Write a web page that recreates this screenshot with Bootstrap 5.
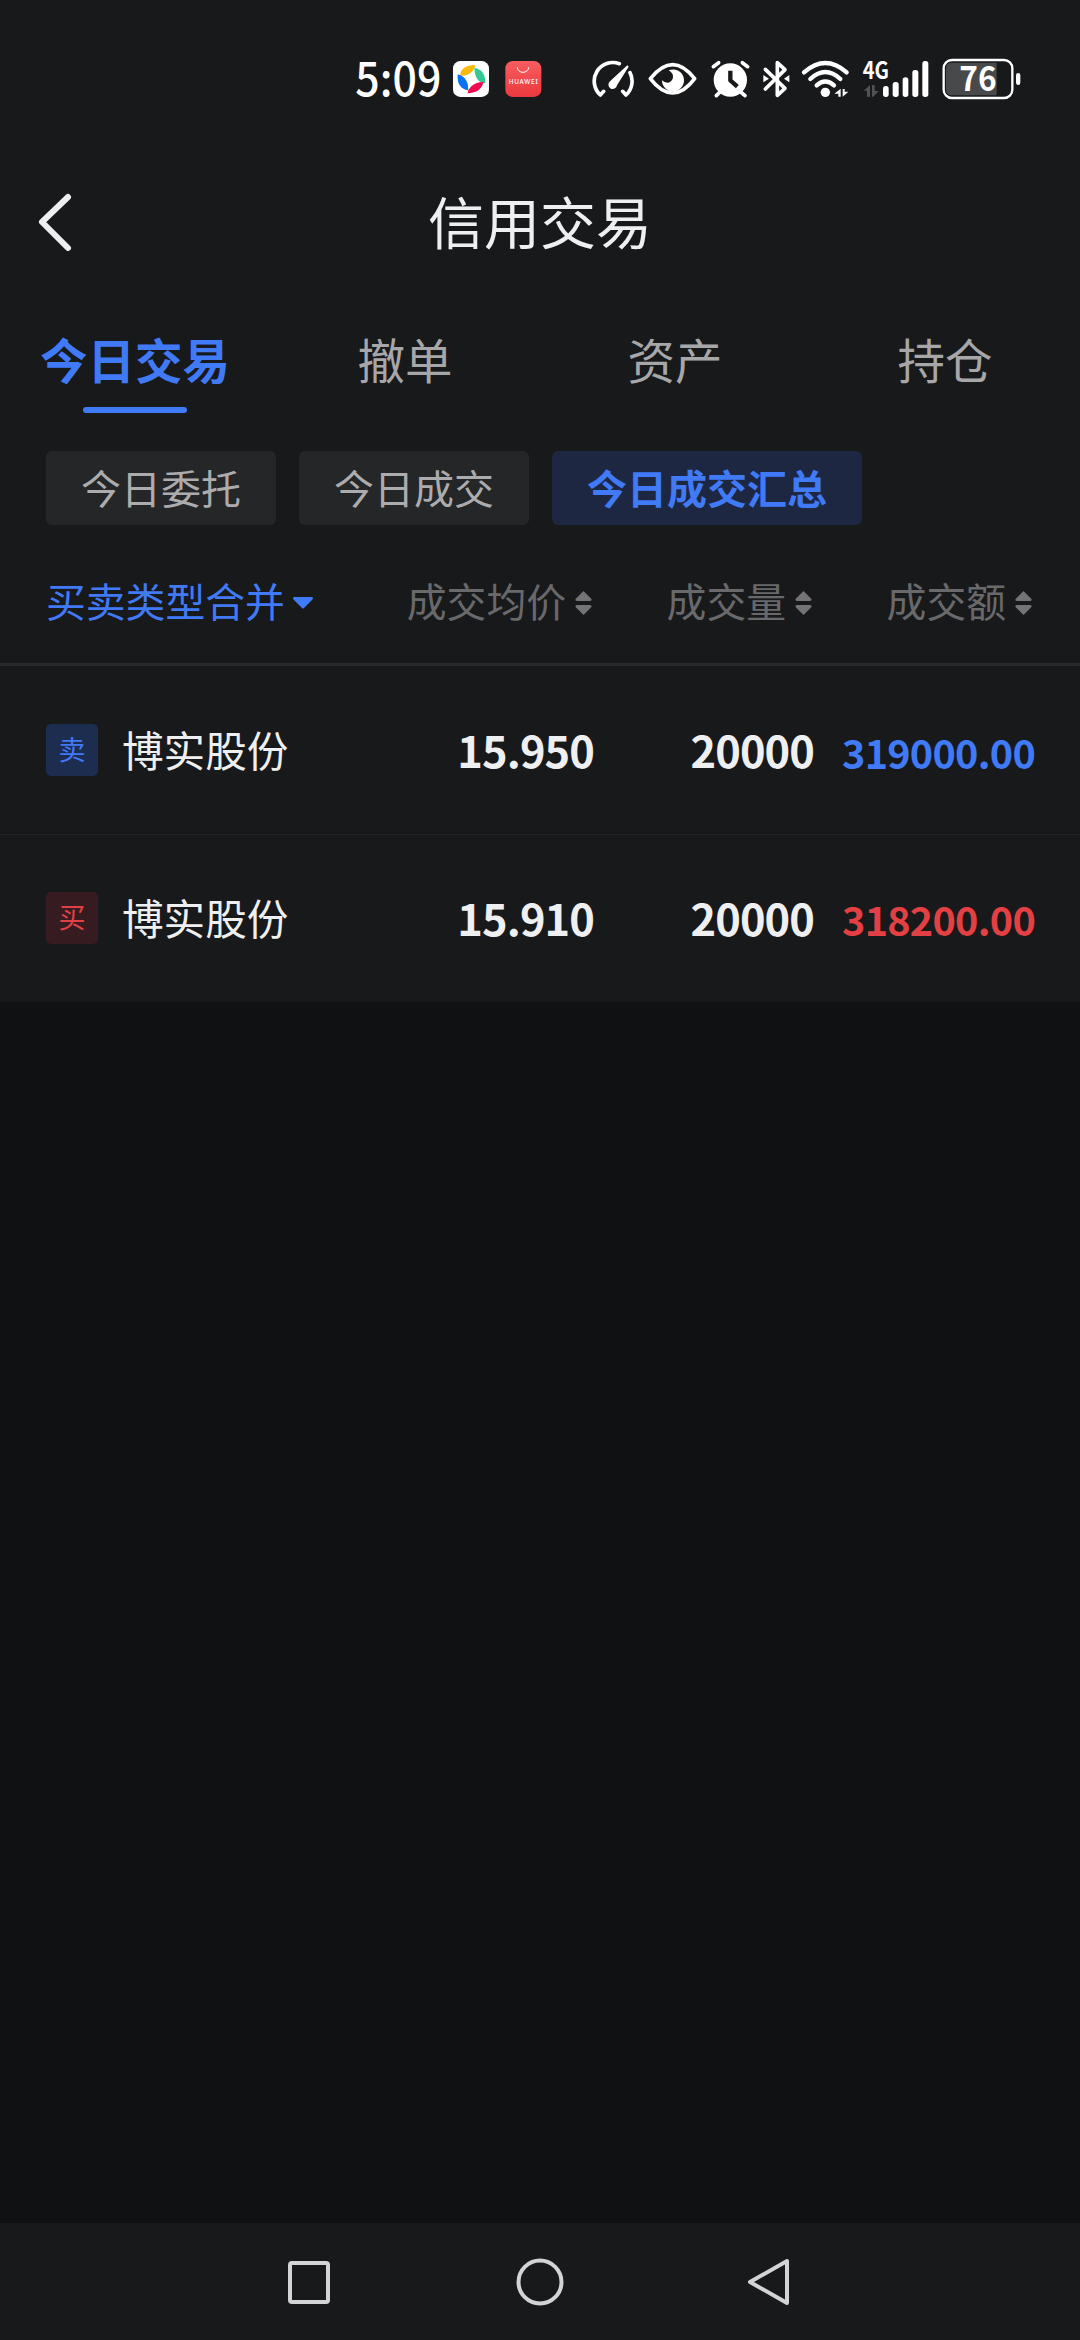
<!DOCTYPE html>
<html lang="zh-CN">
<head>
<meta charset="utf-8">
<meta name="viewport" content="width=device-width, initial-scale=1">
<title>信用交易</title>
<link href="https://cdn.jsdelivr.net/npm/bootstrap@5.3.0/dist/css/bootstrap.min.css" rel="stylesheet">
<style>
  :root { --ink:#eeeff1; --blue:#417af6; --red:#e34043; --panel:#18191b; }
  body { background:#101113; color:var(--ink); font-family:"Noto Sans CJK SC",sans-serif; line-height:1; }
  .screen { width:1080px; height:2340px; }
  .panel { background:var(--panel); }
  .status { height:160px; padding:40px 0 0 340px; }
  .status svg { flex:none; height:80px; }
  .titlebar { height:126px; display:grid; grid-template-columns:1fr auto 1fr; padding:0 36px; }
  .titlebar h1 { font-size:56px; font-weight:400; line-height:80px; padding-bottom:7px; }
  .tabs { height:150px; }
  .tabs .nav-link { position:relative; height:137px; padding:0; font-size:47.5px; line-height:145px; color:#a7a7a9; }
  .tabs .nav-link.active { color:var(--blue); font-weight:700; }
  .tabs .nav-link.active::after { content:""; position:absolute; left:83px; bottom:10px; width:104px; height:6px; border-radius:3px; background:var(--blue); }
  .filters { height:104px; padding:15px 46px 0; gap:23px; }
  .filters .btn { height:74px; padding:0 35px 2px; border:0; border-radius:6px; background:#252628; color:#acacae; font-size:40px; line-height:72px; }
  .filters .btn.active { background:#1d2741; color:var(--blue); font-weight:700; }
  .cols { display:grid; grid-template-columns:260px 287px 220px 1fr; padding:0 47px 0 46px; align-items:center; }
  .heads { height:126px; border-bottom:3px solid #28292b; font-size:39.8px; color:#69696b; }
  .heads > div { display:flex; align-items:center; justify-content:flex-end; gap:9px; white-space:nowrap; padding:0 1px 4px 0; }
  .heads .pick { color:var(--blue); justify-content:flex-start; gap:8px; }
  .heads svg { margin-top:8px; flex:none; }
  .deal { height:168px; }
  .deal + .deal { border-top:1px solid #222325; padding-bottom:2px; }
  .side { width:52px; height:52px; border-radius:5px; font-size:27px; line-height:50px; text-align:center; flex:none; }
  .sell { background:#1d2d50; color:var(--blue); }
  .buy { background:#361c20; color:var(--red); }
  .stock { margin-left:24px; font-size:41.6px; white-space:nowrap; }
  .num { font-size:43.4px; font-weight:700; text-align:right; letter-spacing:-.9px; margin-right:-1px; }
  .amount { font-size:39.6px; font-weight:700; text-align:right; letter-spacing:-.75px; padding-top:3px; margin-right:-2px; white-space:nowrap; }
  .softkeys { height:117px; padding:0 288px; }
</style>
</head>
<body>
<main class="screen d-flex flex-column overflow-hidden">
  <section class="panel">
    <div class="status d-flex">
      <!-- clock -->
      <svg width="113" viewBox="0 0 339 240"><text x="46" y="169" font-size="140" font-weight="500" textLength="258" lengthAdjust="spacingAndGlyphs" fill="#fff">5:09</text></svg>
      <!-- browser app -->
      <svg width="44" viewBox="339 0 132 240"><rect x="339" y="63" width="108" height="108" rx="22" fill="#fff"/>
        <path fill="#fbb90c" d="M360 107Q363 76 405 75Q406 86 398 93Q384 109 360 107z"/>
        <path fill="#35c796" d="M403 84Q436 88 436 130Q425 131 417 123Q404 112 403 84z"/>
        <path fill="#ee0b52" d="M430 126Q424 158 383 160Q384 148 394 139Q408 126 430 126z"/>
        <path fill="#0a73f5" d="M353 103Q372 108 379 122Q386 134 384 151Q350 146 353 103z"/></svg>
      <!-- store app -->
      <svg width="95" viewBox="471 0 285 240"><defs><linearGradient id="g" x2="0" y2="1"><stop stop-color="#f85d60"/><stop offset="1" stop-color="#ea393e"/></linearGradient></defs>
        <rect x="496" y="63" width="108" height="108" rx="22" fill="url(#g)"/><path d="M532 82A17 15 0 0 0 566 82" fill="none" stroke="#fff" stroke-width="3"/>
        <text x="506" y="132" font-size="19" font-weight="500" textLength="87" fill="#fff" font-family="Noto Sans">HUAWEI</text></svg>
      <!-- gauge -->
      <svg width="52" viewBox="756 0 156 240" fill="none" stroke="#fff" stroke-width="11" stroke-linecap="round" stroke-linejoin="round"><path d="M838 71A56 56 0 0 0 781 165L791 154M870 98A56 56 0 0 1 858 165L848 154"/><path d="M862 76L810 124A13 13 0 1 0 831 136L866 80z" fill="#fff" stroke="none"/></svg>
      <!-- eye -->
      <svg width="53" viewBox="912 0 159 240"><path d="M931 116Q965 74 998 74T1064 116Q1032 159 998 159T931 116z" fill="none" stroke="#fff" stroke-width="11" stroke-linejoin="round"/><path d="M986 91A33 33 0 1 1 966 121Q973 129 986 128Q1003 121 998 103Q994 95 986 91z" fill="#fff"/></svg>
      <!-- alarm -->
      <svg width="59.330" viewBox="21 0 178 240" fill="none" stroke="#fff" stroke-width="11" stroke-linecap="round"><circle cx="121" cy="120" r="50" fill="#fff" stroke="none"/><path d="M70 80L86 68M173 80L157 68M90 156L79 167M152 156L165 167"/><path d="M121 92V121L142 140" stroke="#18191b" stroke-linecap="butt" stroke-linejoin="round" stroke-width="13"/></svg>
      <!-- bluetooth -->
      <svg width="43" viewBox="199 0 129 240" fill="none" stroke="#fff" stroke-width="11" stroke-linecap="round" stroke-linejoin="round"><path d="M227 88L286 145L263 166V68L286 89L227 147"/><path d="M221 105L238 116L221 127zM299 105L283 116L299 127z" fill="#fff" stroke="none"/></svg>
      <!-- wifi -->
      <svg width="57" viewBox="328 0 171 240" fill="none" stroke="#fff" stroke-width="13" stroke-linecap="round"><path d="M343 97Q407 41 471 97M362 117Q407 75 452 117M381 136Q407 113 433 136"/><circle cx="407" cy="157" r="14" fill="#fff" stroke="none"/><path d="M453 146V170H446V161H434zM459 170V147H465V155H476z" fill="#fff" stroke="none"/></svg>
      <!-- mobile signal -->
      <svg width="82" viewBox="499 0 246 240" fill="#fff"><text x="519" y="117" font-size="70" font-weight="700" textLength="79" lengthAdjust="spacingAndGlyphs">4G</text>
        <path d="M541 135V170H532V152H522zM547 170V135H555V153H567L551 170z" fill="#515254"/>
        <rect x="580" y="138" width="17" height="33" rx="8"/><rect x="609" y="126" width="18" height="45" rx="8"/><rect x="639" y="112" width="17" height="59" rx="8"/><rect x="668" y="90" width="18" height="81" rx="8"/><rect x="698" y="63" width="18" height="108" rx="8"/></svg>
      <!-- battery -->
      <svg width="92" viewBox="745 0 276 240" fill="#fff"><path d="M784 68H921V166H784Q769 164 769 150V84Q769 70 784 68z" fill="#48494b"/><rect x="762" y="60" width="206" height="114" rx="25" fill="none" stroke="#fff" stroke-width="7"/><text x="809" y="153" font-size="100" font-weight="700" textLength="112" lengthAdjust="spacingAndGlyphs">76</text><rect x="979" y="99" width="13" height="36" rx="6.500"/></svg>
    </div>
    <header class="titlebar align-items-center">
      <svg width="40" height="62" viewBox="0 0 40 62" fill="none" stroke="#eeeff1" stroke-width="6" stroke-linecap="round" stroke-linejoin="round"><path d="M32 5L6 30L32 56"/></svg>
      <h1 class="m-0">信用交易</h1>
    </header>
    <nav class="tabs nav nav-fill row g-0">
      <a class="nav-link active col-3 text-center">今日交易</a><a class="nav-link col-3 text-center">撤单</a><a class="nav-link col-3 text-center">资产</a><a class="nav-link col-3 text-center">持仓</a>
    </nav>
    <div class="filters d-flex">
      <button class="btn">今日委托</button><button class="btn">今日成交</button><button class="btn active">今日成交汇总</button>
    </div>
    <div class="cols heads">
      <div class="pick">买卖类型合并<svg width="20" height="12" viewBox="0 0 20 12"><path d="M1 0H19Q21 1 19 3L11 11Q10 12 9 11L1 3Q-1 1 1 0z" fill="#417af6"/></svg></div>
      <div>成交均价<svg width="17" height="24" viewBox="0 0 17 24" fill="#747476"><path id="sort" d="M8.500 0L16.500 8Q17 10 15 10H2Q0 10 .5 8zM8.500 24L16.500 16Q17 14 15 14H2Q0 14 .5 16z"/></svg></div>
      <div>成交量<svg width="17" height="24" viewBox="0 0 17 24" fill="#747476"><use href="#sort"/></svg></div>
      <div>成交额<svg width="17" height="24" viewBox="0 0 17 24" fill="#747476"><use href="#sort"/></svg></div>
    </div>
    <div class="cols deal">
      <div class="d-flex align-items-center"><span class="side sell">卖</span><span class="stock">博实股份</span></div>
      <div class="num">15.950</div><div class="num">20000</div><div class="amount" style="color:var(--blue)">319000.00</div>
    </div>
    <div class="cols deal">
      <div class="d-flex align-items-center"><span class="side buy">买</span><span class="stock">博实股份</span></div>
      <div class="num">15.910</div><div class="num">20000</div><div class="amount" style="color:var(--red)">318200.00</div>
    </div>
  </section>
  <footer class="softkeys panel mt-auto d-flex align-items-center justify-content-between">
    <svg width="42" height="48" viewBox="0 0 42 48" fill="none" stroke="#d3d4d6" stroke-width="4"><rect x="2" y="5" width="38" height="39" rx="2"/></svg>
    <svg width="48" height="48" viewBox="0 0 48 48" fill="none" stroke="#d3d4d6" stroke-width="4"><circle cx="24" cy="24" r="21.500"/></svg>
    <svg width="42" height="48" viewBox="2 0 42 48" overflow="visible" fill="none" stroke="#d3d4d6" stroke-width="4" stroke-linejoin="round"><path d="M39 3V45L2 24z"/></svg>
  </footer>
</main>
<script src="https://cdn.jsdelivr.net/npm/bootstrap@5.3.0/dist/js/bootstrap.bundle.min.js"></script>
</body>
</html>
